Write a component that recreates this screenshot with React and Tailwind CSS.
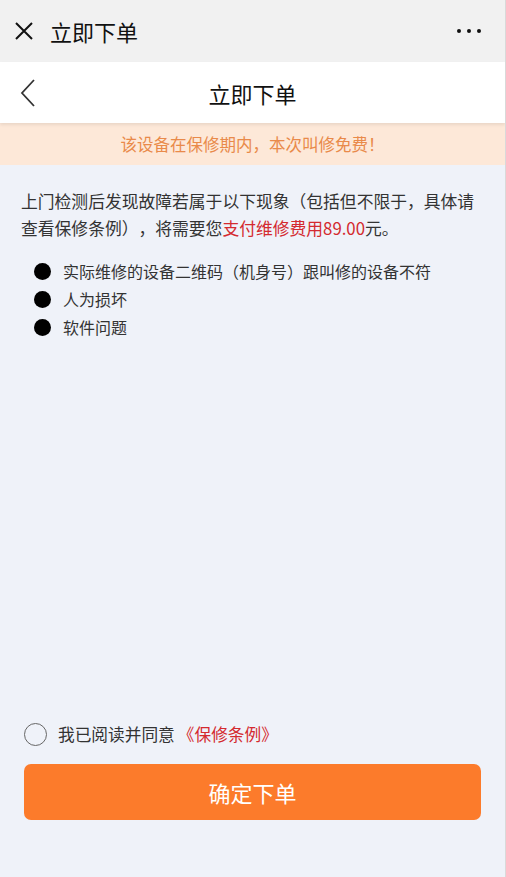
export default function App() {
  const font = { fontFamily: '"Noto Sans CJK SC", "Noto Sans", sans-serif' }
  const items = ['实际维修的设备二维码（机身号）跟叫修的设备不符', '人为损坏', '软件问题']

  return (
    <div className="w-[506px] h-[877px] flex flex-col bg-[#eff2f9] text-[#222] border-r border-[#d9d9d9] overflow-hidden [text-spacing-trim:space-all]" style={font}>
      {/* top bar */}
      <div className="h-[62px] shrink-0 flex items-center bg-[#f1f1f1] pl-[14px] pr-[24px]">
        <svg width="20" height="20" viewBox="0 0 20 20" className="shrink-0">
          <path d="M2 2 L18 18 M18 2 L2 18" stroke="#111" strokeWidth="2" fill="none" />
        </svg>
        <span className="ml-[16px] text-[22px] leading-none text-[#111]">立即下单</span>
        <div className="ml-auto flex items-center gap-[6px]">
          <span className="w-[4px] h-[4px] rounded-full bg-[#111]" />
          <span className="w-[4px] h-[4px] rounded-full bg-[#111]" />
          <span className="w-[4px] h-[4px] rounded-full bg-[#111]" />
        </div>
      </div>

      {/* header */}
      <div className="relative h-[61px] shrink-0 bg-white flex items-center justify-center shadow-[0_2px_3px_rgba(0,0,0,0.08)] z-10">
        <svg width="16" height="28" viewBox="0 0 16 28" className="absolute left-[20px] top-[17px]">
          <path d="M14 1 L2 14 L14 27" stroke="#333" strokeWidth="1.8" fill="none" />
        </svg>
        <span className="text-[22px] leading-none text-[#111]">立即下单</span>
      </div>

      {/* banner */}
      <div className="h-[42px] shrink-0 bg-[#fde8d8] flex items-center justify-center">
        <span className="text-[16.5px] leading-none text-[#e98a4a]">该设备在保修期内，本次叫修免费！</span>
      </div>

      {/* body */}
      <div className="flex-1 flex flex-col px-[21px] pt-[23px]">
        <p className="text-[16.8px] leading-[27px] text-[#333]">
          上门检测后发现故障若属于以下现象（包括但不限于，具体请查看保修条例），将需要您<span className="text-[#d42a2f]">支付维修费用89.00</span>元。
        </p>
        <ul className="mt-[15px] flex flex-col">
          {items.map((t) => (
            <li key={t} className="flex items-center h-[28px]">
              <span className="ml-[13px] w-[17px] h-[17px] rounded-full bg-black shrink-0" />
              <span className="ml-[12px] text-[16px] leading-none text-[#333]">{t}</span>
            </li>
          ))}
        </ul>

        <div className="mt-auto flex items-center px-[3px]">
          <span className="w-[23px] h-[23px] rounded-full border-[1.5px] border-[#666] shrink-0" />
          <span className="ml-[11px] text-[16.7px] leading-none text-[#333]">我已阅读并同意</span>
          <span className="ml-[3px] text-[16.7px] leading-none text-[#d42a2f]">《保修条例》</span>
        </div>
        <button className="mt-[18px] mb-[57px] mx-[3px] h-[56px] rounded-[7px] bg-[#fc7b2b] text-white text-[22px] flex items-center justify-center">
          确定下单
        </button>
      </div>
    </div>
  )
}
